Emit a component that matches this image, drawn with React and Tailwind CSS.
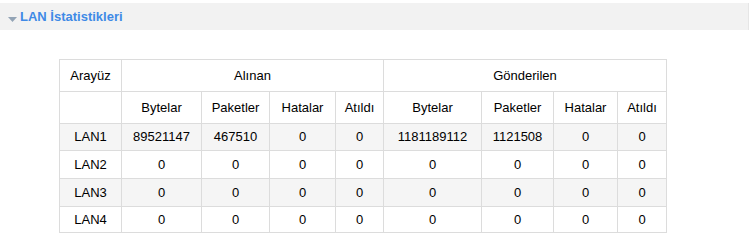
const rows = [
  ["LAN1", "89521147", "467510", "0", "0", "1181189112", "1121508", "0", "0"],
  ["LAN2", "0", "0", "0", "0", "0", "0", "0", "0"],
  ["LAN3", "0", "0", "0", "0", "0", "0", "0", "0"],
  ["LAN4", "0", "0", "0", "0", "0", "0", "0", "0"],
];

const heights = ["h-[27px]", "h-[28px]", "h-[28px]", "h-[26px]"];
const colWidths = [62, 80, 68, 66, 48, 98, 72, 64, 49];
const subHeads = ["Bytelar", "Paketler", "Hatalar", "Atıldı"];

function App() {
  return (
    <div className="w-[749px] h-[242px] bg-white font-['Liberation_Sans',Arial,sans-serif] text-[13px] text-black">
      <div className="pt-[3px]">
        <div className="h-[27px] bg-[#f2f2f2] border-r border-[#e6e6e6] w-[749px] flex items-center pl-[7px] gap-[2px]">
          <svg width="11" height="7" viewBox="0 0 11 7" className="mt-[5px]">
            <path d="M1 1 L10 1 L5.5 6 Z" fill="#93a4b6" />
          </svg>
          <span className="font-bold text-[13px] text-[#3f8ae6]">LAN İstatistikleri</span>
        </div>
      </div>
      <div className="pl-[59px] pt-[29px]">
        <table className="border-collapse table-fixed w-[607px] text-center">
          <colgroup>
            {colWidths.map((w, i) => (
              <col key={i} style={{ width: w }} />
            ))}
          </colgroup>
          <thead>
            <tr className="h-[32px]">
              <th className="border border-[#dcdcdc] font-normal">Arayüz</th>
              <th colSpan={4} className="border border-[#dcdcdc] font-normal">Alınan</th>
              <th colSpan={4} className="border border-[#dcdcdc] font-normal">Gönderilen</th>
            </tr>
            <tr className="h-[32px]">
              <th className="border border-[#dcdcdc]"></th>
              {[...subHeads, ...subHeads].map((h, i) => (
                <th key={i} className="border border-[#dcdcdc] font-normal">{h}</th>
              ))}
            </tr>
          </thead>
          <tbody>
            {rows.map((r, i) => (
              <tr key={r[0]} className={`${heights[i]} ${i % 2 === 0 ? "bg-[#f5f5f5]" : "bg-white"}`}>
                {r.map((c, j) => (
                  <td key={j} className="border border-[#dcdcdc] p-0">{c}</td>
                ))}
              </tr>
            ))}
          </tbody>
        </table>
      </div>
    </div>
  );
}

export default App;
